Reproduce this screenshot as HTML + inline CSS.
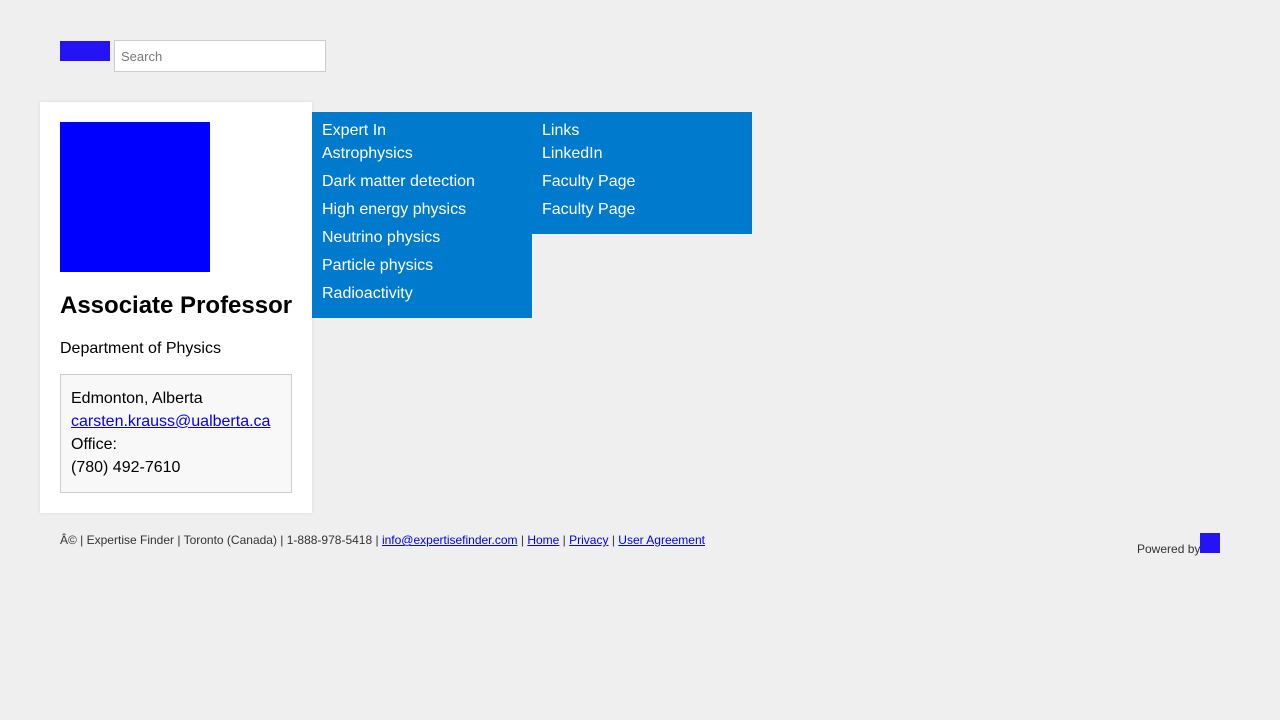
<!DOCTYPE html>
<html><head><meta charset="utf-8"><style>
*{box-sizing:border-box}
body{margin:0;background:#efefef;font-family:"Liberation Sans",Arial,sans-serif;width:1280px;height:720px;position:relative;overflow:hidden}
.abs{position:absolute}
a{color:#0000ee}
.blue{background:#007acc;color:#fff;font-size:16px}
.blue div{position:absolute;left:10px;white-space:nowrap}
</style></head><body>
<div class="abs" style="left:60px;top:41px;width:50px;height:20px;background:#2414f5"></div>
<div class="abs" style="left:114px;top:40px;width:212px;height:32px;background:#fff;border:1px solid #ccc;font-size:13px;color:#777;padding:8px 0 0 6px">Search</div>
<div class="abs" style="left:40px;top:102px;width:272px;height:411px;background:#fff;box-shadow:0 0 3px rgba(0,0,0,.1)"></div>
<div class="abs" style="left:60px;top:122px;width:150px;height:150px;background:#0000ff"></div>
<div class="abs" style="left:60px;top:292px;font-size:24px;font-weight:bold;white-space:nowrap">Associate Professor</div>
<div class="abs" style="left:60px;top:340px;font-size:16px">Department of Physics</div>
<div class="abs" style="left:60px;top:374px;width:232px;height:119px;background:#f8f8f8;border:1px solid #ccc;font-size:16px;line-height:23px;padding:12px 0 0 10px">Edmonton, Alberta<br><a href="#">carsten.krauss@ualberta.ca</a><br>Office:<br>(780) 492-7610</div>
<div class="abs blue" style="left:312px;top:112px;width:220px;height:206px">
<div style="top:10px">Expert In</div><div style="top:33px">Astrophysics</div><div style="top:61px">Dark matter detection</div><div style="top:89px">High energy physics</div><div style="top:117px">Neutrino physics</div><div style="top:145px">Particle physics</div><div style="top:173px">Radioactivity</div></div>
<div class="abs blue" style="left:532px;top:112px;width:220px;height:122px">
<div style="top:10px">Links</div><div style="top:33px">LinkedIn</div><div style="top:61px">Faculty Page</div><div style="top:89px">Faculty Page</div></div>
<div class="abs" style="left:60px;top:533px;font-size:12px;color:#333;white-space:nowrap">Â© | Expertise Finder | Toronto (Canada) | 1-888-978-5418 | <a href="#">info@expertisefinder.com</a> | <a href="#">Home</a> | <a href="#">Privacy</a> | <a href="#">User Agreement</a></div>
<div class="abs" style="left:1137px;top:542px;font-size:12px;color:#333">Powered by</div>
<div class="abs" style="left:1200px;top:533px;width:20px;height:20px;background:#2414f5"></div>
</body></html>
